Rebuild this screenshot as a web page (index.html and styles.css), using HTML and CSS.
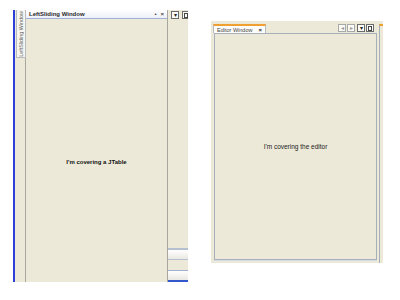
FILE: index.html
```html
<!DOCTYPE html>
<html lang="en">
<head>
    <meta charset="UTF-8">
    <title>Sliding windows</title>
    <link rel="stylesheet" href="styles.css">
</head>
<body>
    <div class="desk">
        <div class="slider">
            <div class="rail"></div>
            <div class="side">
                <div class="side-tab"><span>LeftSliding Window</span></div>
            </div>
            <div class="panel">
                <div class="panel-title">
                    <span>LeftSliding Window</span>
                    <span class="title-icons"><span>&#8226;</span><span>&#215;</span></span>
                </div>
                <div class="panel-body">I'm covering a JTable</div>
            </div>
            <div class="strip">
                <div class="strip-buttons">
                    <span class="btn">&#9662;</span>
                    <span class="btn box"></span>
                </div>
                <div class="strip-fill"></div>
                <div class="strip-row"></div>
                <div class="strip-gap"></div>
                <div class="strip-row last"></div>
            </div>
        </div>

        <div class="editor">
            <div class="editor-main">
                <div class="editor-head">
                    <div class="tab"><span>Editor Window</span><span class="tab-close">&#215;</span></div>
                    <div class="editor-buttons">
                        <span class="btn dim">&#9666;</span>
                        <span class="btn dim">&#9656;</span>
                        <span class="btn">&#9662;</span>
                        <span class="btn box"></span>
                    </div>
                </div>
                <div class="editor-body">I'm covering the editor</div>
            </div>
            <div class="editor-edge"></div>
        </div>
    </div>
</body>
</html>
```

FILE: styles.css
```css
body {
    margin: 0;
    background-color: #ffffff;
    font-family: "Liberation Sans", Arial, sans-serif;
    width: 400px;
    height: 300px;
    overflow: hidden;
}
.desk {
    display: flex;
    align-items: flex-start;
    gap: 23px;
    padding: 10px 0 0 13px;
}
.slider {
    display: flex;
    height: 272px;
    background-color: #ece9d8;
}
.rail {
    width: 2px;
    background-color: #2c3fd8;
}
.side {
    width: 10px;
    border-right: 1px solid #a7a7a0;
}
.side-tab {
    height: 47px;
    margin-left: 1px;
    width: 8px;
    background-color: #f7f7f2;
    border: 1px solid #b8bcc0;
    border-top: none;
    display: flex;
    justify-content: center;
    align-items: center;
}
.side-tab span {
    writing-mode: vertical-rl;
    transform: rotate(180deg);
    font-size: 5.4px;
    color: #6a6a6a;
    white-space: nowrap;
}
.panel {
    width: 141px;
    display: flex;
    flex-direction: column;
    border-right: 1px solid #a7a7a0;
}
.panel-title {
    height: 8px;
    display: flex;
    justify-content: space-between;
    align-items: center;
    padding: 0 3px;
    background: linear-gradient(#ffffff, #eef0f8);
    border-bottom: 1px solid #9fb1d8;
    font-size: 6px;
    font-weight: bold;
    color: #2a2a2a;
}
.title-icons {
    display: flex;
    gap: 4px;
    font-size: 6px;
    color: #444444;
}
.panel-body {
    flex: 1;
    padding-top: 140px;
    text-align: center;
    font-size: 6px;
    font-weight: bold;
    color: #111111;
}
.strip {
    width: 20px;
    display: flex;
    flex-direction: column;
    overflow: hidden;
}
.strip-buttons {
    display: flex;
    gap: 3px;
    padding: 0 0 0 3px;
    height: 9px;
    align-items: flex-end;
}
.btn {
    flex: none;
    width: 6px;
    height: 6px;
    border: 1px solid #6a6a6a;
    background-color: #fafaf6;
    font-size: 6px;
    line-height: 6px;
    text-align: center;
    color: #222222;
}
.btn.box::after {
    content: "";
    display: block;
    margin: 1px;
    height: 3px;
    border: 1px solid #444444;
    border-top-width: 1px;
}
.btn.box {
    width: 6px;
}
.btn.dim {
    border-color: #a8a8a8;
    color: #999999;
}
.strip-fill {
    flex: 1;
}
.strip-row {
    height: 9px;
    border-top: 2px solid #b4bfd0;
    border-bottom: 1px solid #b4bfd0;
    background: linear-gradient(#ffffff, #e9e8e2);
}
.strip-row.last {
    border-top: 1px solid #9fb0d0;
    border-bottom: 2px solid #3358cc;
}
.strip-gap {
    height: 10px;
}
.editor {
    display: flex;
    width: 172px;
    height: 242px;
    margin-top: 11px;
    background-color: #ece9d8;
}
.editor-main {
    width: 164px;
    display: flex;
    flex-direction: column;
    padding: 2px 0 3px 3px;
}
.editor-head {
    display: flex;
    justify-content: space-between;
    align-items: flex-end;
    height: 10px;
}
.tab {
    display: flex;
    align-items: center;
    gap: 6px;
    height: 7px;
    padding: 0 3px 0 3px;
    margin-left: -1px;
    background-color: #fcfcfa;
    border-top: 2px solid #f0a030;
    border-left: 1px solid #b8bcc0;
    border-right: 1px solid #b8bcc0;
    font-size: 5.5px;
    color: #444444;
}
.tab-close {
    font-size: 6px;
    font-weight: bold;
    color: #222222;
}
.editor-buttons {
    display: flex;
    gap: 1px;
    align-self: center;
    margin-right: 3px;
}
.editor-buttons .btn:nth-child(3) {
    margin-left: 1px;
}
.editor-body {
    flex: 1;
    display: flex;
    justify-content: center;
    align-items: center;
    border: 1px solid #a6b0b8;
    box-shadow: 0 1px 0 #d4dce8;
    font-size: 6.5px;
    color: #222222;
}
.editor-edge {
    width: 3px;
    margin-left: 2px;
    margin-top: 3px;
    border-left: 1px solid #a6b0b8;
    border-top: 2px solid #f0a030;
}
```
